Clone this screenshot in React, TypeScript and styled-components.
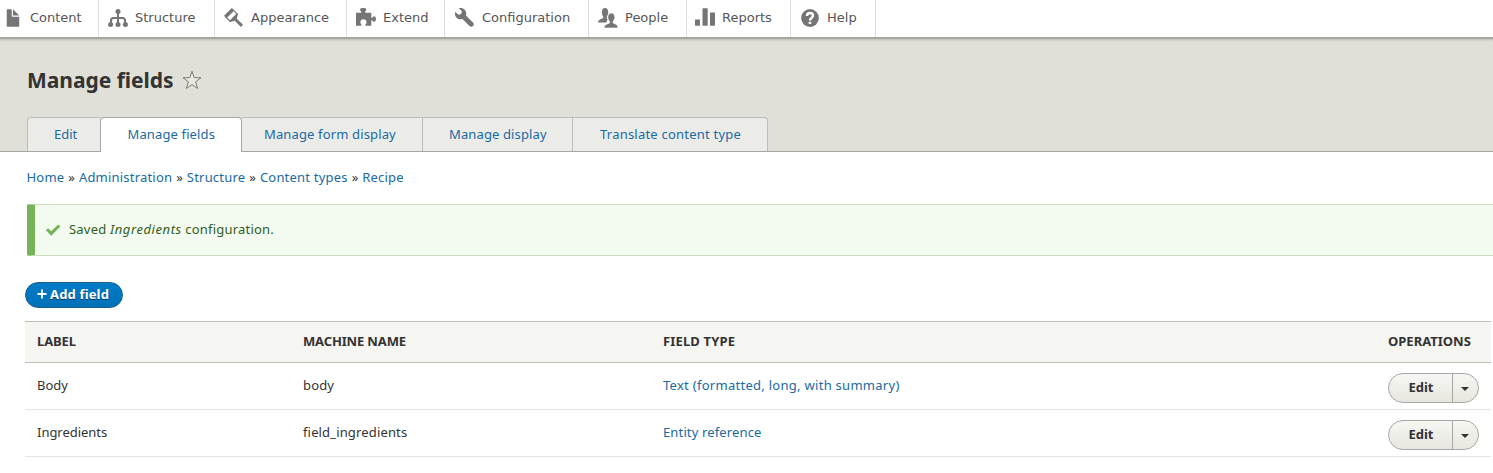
import React from "react";
import styled, { createGlobalStyle } from "styled-components";

const Global = createGlobalStyle`
  * { box-sizing: border-box; }
  body { margin: 0; background: #fff; overflow: hidden; }
`;

const Page = styled.div`
  height: 473px;
  overflow: hidden;
  color: #333;
  font: 13px/20px "Noto Sans", "Open Sans", sans-serif;
`;

const Toolbar = styled.nav`
  display: flex;
  height: 37px;
  background: #fff;
  position: relative;
  box-shadow: 0 1px 0 #a2a29f, 0 2px 0 #a9a9a5, 0 3px 1px #c4c4be, 0 4px 3px #d4d4cd;
`;

const ToolbarItem = styled.a<{ $w: number; $gap?: number; $first?: boolean }>`
  display: flex;
  align-items: flex-start;
  flex: none;
  width: ${(p) => p.$w}px;
  padding: 8px 0 0 ${(p) => (p.$first ? 3 : 9)}px;
  border-right: 1px solid #ddd;
  color: #565656;
  font: 13px/20px "DejaVu Sans", sans-serif;
  white-space: nowrap;
  svg { flex: none; width: 20px; height: 20px; margin-right: ${(p) => p.$gap ?? 7}px; fill: #757575; overflow: visible; }
`;

const Header = styled.header`
  height: 115px;
  padding: 32px 27px 0;
  background: #e0e0d8;
  border-bottom: 1px solid #a6a6a6;
`;

const TitleRow = styled.div`
  display: flex;
  align-items: center;
  height: 22px;
  gap: 8px;
  svg { width: 20px; height: 20px; }
`;

const Title = styled.h1`
  margin: 0;
  font-size: 21px;
  line-height: 22px;
  font-weight: 700;
  letter-spacing: -0.03px;
  white-space: nowrap;
`;

const Tabs = styled.div`
  display: flex;
  height: 35px;
  margin-top: 26px;
`;

const Tab = styled.a<{ $w: number; $pad: number; $active?: boolean; $ls: number }>`
  flex: none;
  width: ${(p) => p.$w}px;
  height: ${(p) => (p.$active ? 35 : 34)}px;
  padding-left: ${(p) => p.$pad}px;
  border: 1px solid ${(p) => (p.$active ? "#a6a6a6" : "#bcbcb8")};
  border-bottom: 0;
  border-left-width: ${(p) => (p.$active ? 1 : 0)}px;
  background: ${(p) => (p.$active ? "#fff" : "#ebece8")};
  color: #1a6aa3;
  line-height: 33px;
  letter-spacing: ${(p) => p.$ls}px;
  white-space: nowrap;
  &:first-child { border-left-width: 1px; border-right: 0; border-top-left-radius: 4px; }
  &:last-child { border-top-right-radius: 4px; }
  ${(p) => p.$active && "border-radius: 4px 4px 0 0;"}
`;

const Breadcrumb = styled.nav`
  display: flex;
  gap: 4px;
  height: 20px;
  margin: 15px 0 0 26.5px;
  white-space: nowrap;
`;

const Link = styled.a<{ $ls?: number }>`
  color: #1a6aa3;
  letter-spacing: ${(p) => p.$ls ?? 0}px;
`;

const Message = styled.div`
  display: flex;
  align-items: center;
  height: 52px;
  margin: 17px 0 0 27px;
  padding: 0 0 2px 10px;
  background: #f3faef;
  border: 1px solid #c9dcb8;
  border-left: 8px solid #77b259;
  border-right: 0;
  border-radius: 2px 0 0 2px;
  color: #325e1c;
  letter-spacing: 0.2px;
  white-space: pre;
  svg { width: 16px; height: 16px; margin: 2px 8px 0 0; fill: #73b355; }
  em { letter-spacing: 0.57px; }
`;

const AddButton = styled.button`
  display: flex;
  align-items: center;
  width: 98px;
  height: 26px;
  margin: 26px 0 13px 25px;
  padding: 0 0 2px 11px;
  gap: 3px;
  border: 1px solid #1e5c90;
  border-radius: 13px;
  background: linear-gradient(#007bc6, #0071b8);
  color: #fff;
  font: 700 13px/20px "Noto Sans", sans-serif;
  letter-spacing: 0.16px;
  text-shadow: 0 1px rgba(0, 0, 0, 0.5);
  white-space: nowrap;
  svg { flex: none; width: 10px; height: 10px; }
`;

const Table = styled.div`
  width: 1466px;
  margin-left: 25px;
  border-top: 1px solid #bfbfba;
`;

const Row = styled.div<{ $head?: boolean }>`
  display: grid;
  grid-template-columns: 266px 360px 725px 1fr;
  align-items: center;
  height: ${(p) => (p.$head ? 41 : 47)}px;
  padding-left: 12px;
  border-bottom: 1px solid ${(p) => (p.$head ? "#bfbfba" : "#e6e4df")};
  background: ${(p) => (p.$head ? "#f5f5f2" : "#fff")};
  font-weight: ${(p) => (p.$head ? 700 : 400)};
  white-space: nowrap;
  > span, > a { padding-bottom: 2px; }
`;

const Cell = styled.span<{ $ls?: number }>`
  letter-spacing: ${(p) => p.$ls ?? 0}px;
`;

const DropButton = styled.div`
  display: flex;
  width: 91px;
  height: 30px;
  margin-top: 4px;
  border: 1px solid #a6a6a6;
  border-radius: 15px;
  overflow: hidden;
  background: linear-gradient(#f6f6f3, #e7e7df);
  color: #333;
  font-weight: 700;
`;

const DropMain = styled.span`
  width: 63px;
  padding-left: 1px;
  line-height: 27px;
  text-align: center;
`;

const DropToggle = styled.span`
  display: flex;
  align-items: center;
  flex: 1;
  padding: 2px 0 0 8px;
  border-left: 1px solid #a6a6a6;
  svg { width: 8px; height: 4px; }
`;

const icons: Record<string, React.ReactNode> = {
  Content: (
    <svg viewBox="0 0 16 16">
      <path d="M12.502 7h-5c-.276 0-.502-.225-.502-.5v-5c0-.275-.225-.5-.5-.5h-3c-.275 0-.5.225-.5.5v13.029c0 .275.225.5.5.5h9.002c.275 0 .5-.225.5-.5V7.5c0-.275-.225-.5-.5-.5zM8.502 6h4c.275 0 .34-.159.146-.354L8.355 1.354c-.195-.195-.353-.129-.353.146v4c0 .275.225.5.5.5z" />
    </svg>
  ),
  Structure: (
    <svg viewBox="0 0 20 20">
      <circle cx="10" cy="3.5" r="2.500" />
      <path d="M3 15v-2.500Q3 10 5.500 10H14.500Q17 10 17 12.500V15M10 4V15" fill="none" stroke="#757575" strokeWidth="2" />
      <circle cx="2.600" cy="16.500" r="2.500" />
      <circle cx="10" cy="16.500" r="2.500" />
      <circle cx="17.400" cy="16.500" r="2.500" />
    </svg>
  ),
  Appearance: (
    <svg viewBox="0 0 20 20">
      <path d="M0 7.800 7.800 0 10.300 2.500 2.500 10.300z" />
      <path d="M9 1.800 13.200 6 6 13.200 1.800 9" fill="none" stroke="#757575" strokeWidth="1.100" />
      <path d="M13.200 5.200 14 6 12.800 10.800 19 16.800 16.900 18.900 10.800 12.800 6 14 5.200 13.200z" />
    </svg>
  ),
  Extend: (
    <svg viewBox="0 0 20 20">
      <path d="M0 4.700H5.200V3.300Q4 3 4 1.800 4 0 6 0H8.500Q10.300 0 10.300 1.800 10.300 3 9.200 3.300V4.700H15.300V9.800H16.200Q16.800 8.200 18.200 8.200 20 8.500 20 11T18.200 13.800Q16.800 13.800 16.200 12.200H15.300V17.700H9.500V16.500Q10.500 15.700 10.500 14.300A3 3 0 0 0 4.400 14.300Q4.400 15.700 5.400 16.500V17.700H0z" />
    </svg>
  ),
  Configuration: (
    <svg viewBox="-.8 0 16 16">
      <path d="M14.416 11.586l-.01-.009-5.656-5.656c.15-.449.252-.921.252-1.421 0-2.485-2.016-4.500-4.502-4.500-.505 0-.981.102-1.434.255l2.431 2.431-.588 2.196-2.196.588L.268 3.025C.106 3.489 0 3.981 0 4.500 0 6.986 2.014 9 4.500 9c.5 0 .972-.102 1.421-.251l5.667 5.665c.781.781 2.047.781 2.828 0s.781-2.047 0-2.828z" />
    </svg>
  ),
  People: (
    <svg viewBox="0 0 20 20">
      <path d="M0 14.600Q0 11.800 2.500 11.200L5.200 10V8.500Q4 7.500 4.100 5.500 3.300 4.500 4 3.500 4 0 7 0T10.100 3.500Q10.700 4.500 10 5.500 9.800 7.500 8.800 8.500V10L9.500 11.500 8.500 14.600z" />
      <path d="M6 20Q6 17 8.500 16.300L11.500 15V13.300Q10.200 12 10.100 10.500 9.300 9.200 10 8.300 10.200 5 13.300 5T16.600 8.300Q17.300 9.200 16.500 10.500 16.400 12 15.100 13.300V15L17.800 16.300Q20 17 20 20z" stroke="#fff" strokeWidth=".6" />
    </svg>
  ),
  Reports: (
    <svg viewBox="0 0 20 20">
      <rect x="-1" y="11.500" width="5" height="6.200" rx=".4" />
      <rect x="6.500" y=".2" width="5.200" height="17.500" rx=".4" />
      <rect x="14" y="4.500" width="5" height="13.200" rx=".4" />
    </svg>
  ),
  Help: (
    <svg viewBox="0 0 20 20">
      <circle cx="10" cy="10" r="8.900" />
      <path d="M7 8Q7 5 10 5T13 7.700C13 9.800 10 9.800 10 12.500" fill="none" stroke="#fff" strokeWidth="2.400" />
      <rect x="8.700" y="13.700" width="2.600" height="2.400" rx=".6" fill="#fff" />
    </svg>
  ),
};

const menu = [
  { name: "Content", w: 99 },
  { name: "Structure", w: 116 },
  { name: "Appearance", w: 132 },
  { name: "Extend", w: 98 },
  { name: "Configuration", w: 144, gap: 8 },
  { name: "People", w: 98 },
  { name: "Reports", w: 104, gap: 6 },
  { name: "Help", w: 85 },
];

const tabs = [
  { name: "Edit", w: 73, pad: 26, ls: 0 },
  { name: "Manage fields", w: 142, pad: 26.5, ls: 0.13, active: true },
  { name: "Manage form display", w: 181, pad: 22, ls: 0.14 },
  { name: "Manage display", w: 150, pad: 26, ls: 0.12 },
  { name: "Translate content type", w: 195, pad: 27, ls: 0.22 },
];

const crumbs = ["Home", "Administration", "Structure", "Content types", "Recipe"];

const fields = [
  { label: "Body", machine: "body", type: "Text (formatted, long, with summary)", ls: 0.28 },
  { label: "Ingredients", machine: "field_ingredients", type: "Entity reference", ls: 0.14 },
];

export default function App() {
  return (
    <Page>
      <Global />
      <Toolbar>
        {menu.map((m, i) => (
          <ToolbarItem key={m.name} $w={m.w} $gap={m.gap} $first={i === 0}>
            {icons[m.name]}
            {m.name}
          </ToolbarItem>
        ))}
      </Toolbar>
      <Header>
        <TitleRow>
          <Title>Manage fields</Title>
          <svg viewBox="0 0 20 20">
            <path d="M10 1.200 12.200 7.700H19L13.600 11.800 15.600 18.500 10 14.500 4.400 18.500 6.400 11.800 1 7.700H7.800z" fill="#e9e9e4" stroke="#7c7c78" strokeWidth="1" strokeLinejoin="round" />
          </svg>
        </TitleRow>
        <Tabs>
          {tabs.map((t) => (
            <Tab key={t.name} $w={t.w} $pad={t.pad} $active={t.active} $ls={t.ls}>
              {t.name}
            </Tab>
          ))}
        </Tabs>
      </Header>
      <Breadcrumb>
        {crumbs.map((c, i) => (
          <React.Fragment key={c}>
            {i > 0 && <span>»</span>}
            <Link $ls={0.2}>{c}</Link>
          </React.Fragment>
        ))}
      </Breadcrumb>
      <Message>
        <svg viewBox="0 0 16 16">
          <path d="M1 8.300 3 6.200 6.200 9.300 13.300 2.600 15.300 4.600 6.200 13.800z" />
        </svg>
        Saved <em>Ingredients</em> configuration.
      </Message>
      <AddButton>
        <svg viewBox="0 0 10 10">
          <path d="M5 .5V9.500M.5 5H9.500" stroke="#fff" strokeWidth="1.800" />
        </svg>
        Add field
      </AddButton>
      <Table>
        <Row $head>
          <Cell $ls={-0.1}>LABEL</Cell>
          <Cell $ls={-0.15}>MACHINE NAME</Cell>
          <Cell $ls={0.15}>FIELD TYPE</Cell>
          <Cell>OPERATIONS</Cell>
        </Row>
        {fields.map((f) => (
          <Row key={f.label}>
            <Cell $ls={-0.03}>{f.label}</Cell>
            <Cell $ls={0.15}>{f.machine}</Cell>
            <Link $ls={f.ls}>{f.type}</Link>
            <DropButton>
              <DropMain>Edit</DropMain>
              <DropToggle>
                <svg viewBox="0 0 8 4">
                  <path d="M0 0H8L4 4z" fill="#333" />
                </svg>
              </DropToggle>
            </DropButton>
          </Row>
        ))}
      </Table>
    </Page>
  );
}
